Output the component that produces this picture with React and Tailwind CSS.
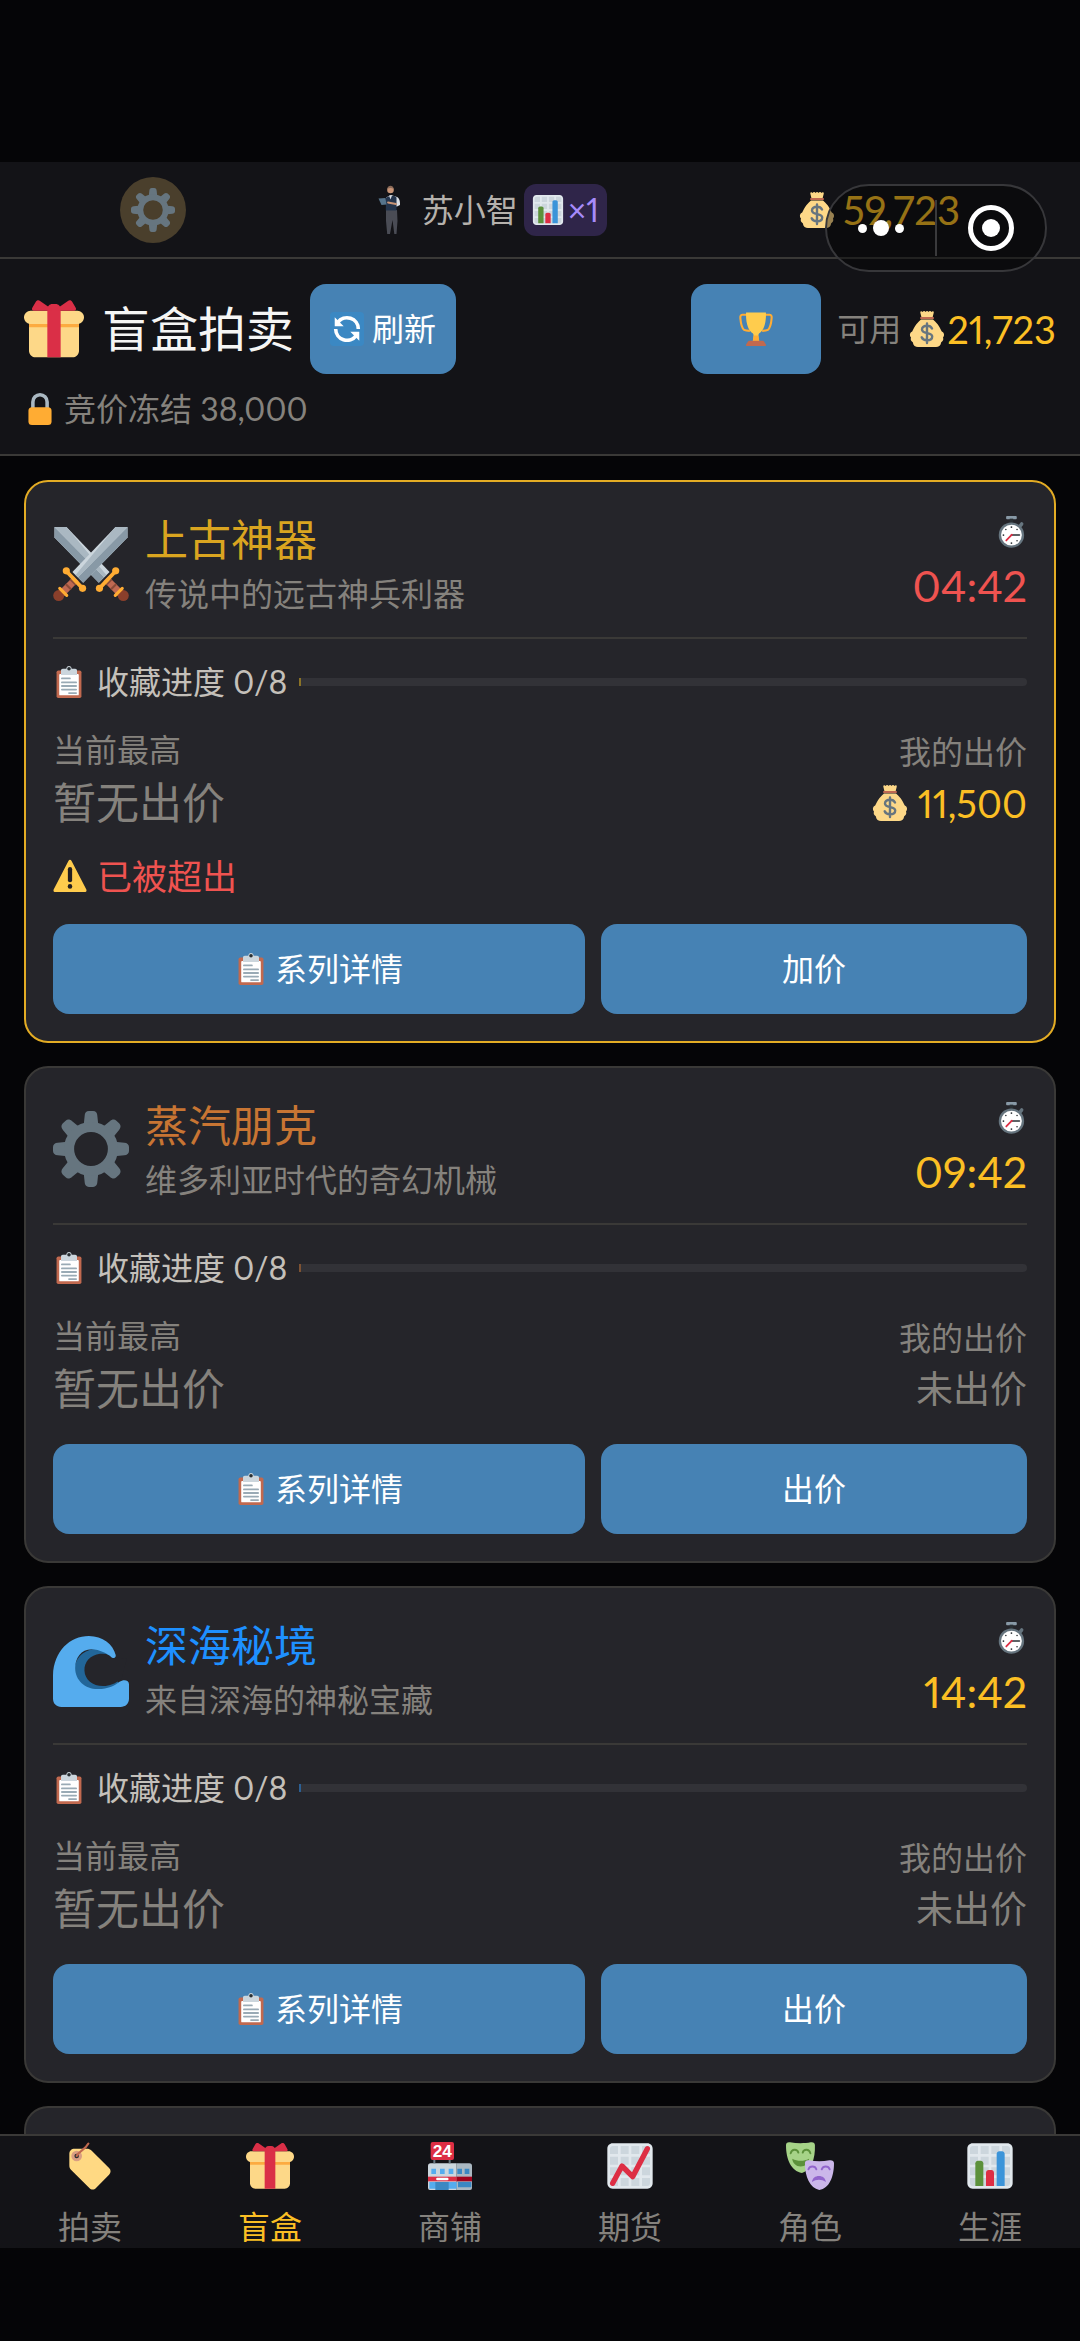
import clsx from 'clsx';

const Emoji = ({ className, children, label }) => (
  <svg viewBox="0 0 36 36" className={clsx('shrink-0', className)} role="img" aria-label={label}>
    {children}
  </svg>
);

const Gift = ({ className }) => (
  <Emoji className={className} label="礼物">
    <path fill="#FDD888" d="M33 31c0 2.2-1.8 4-4 4H7c-2.2 0-4-1.8-4-4V14c0-2.2 1.8-4 4-4h22c2.2 0 4 1.8 4 4v17z" />
    <path fill="#FDD888" d="M36 11c0 2.2-1.8 4-4 4H4c-2.2 0-4-1.8-4-4s1.8-4 4-4h28c2.2 0 4 1.8 4 4z" />
    <path fill="#FCAB40" d="M3 15h30v2H3z" />
    <path fill="#DA2F47" d="M19 3h-2c-1.657 0-3 1.343-3 3v29h8V6c0-1.656-1.343-3-3-3z" />
    <path fill="#DA2F47" d="M16 7c1.1 0 1.263-.516.361-1.147L9.639 1.147c-.902-.631-2.085-.366-2.631.589L4.992 5.264C4.446 6.219 4.9 7 6 7h10zm4 0c-1.1 0-1.263-.516-.361-1.147l6.723-4.706c.901-.631 2.085-.366 2.631.589l2.016 3.527C31.554 6.219 31.1 7 30 7H20z" />
  </Emoji>
);

const ChartGrid = () => (
  <>
    <rect x="2" y="2" width="32" height="32" rx="3" fill="#CCD6DD" />
    <path fill="#E1E8ED" d="M31 1H5C2.791 1 1 2.791 1 5v26c0 2.209 1.791 4 4 4h26c2.209 0 4-1.791 4-4V5c0-2.209-1.791-4-4-4zm0 2c1.103 0 2 .897 2 2v4h-6V3h4zm-4 16h6v6h-6v-6zm0-2v-6h6v6h-6zM25 3v6h-6V3h6zm-6 8h6v6h-6v-6zm0 8h6v6h-6v-6zM17 3v6h-6V3h6zm-6 8h6v6h-6v-6zm0 8h6v6h-6v-6zM3 5c0-1.103.897-2 2-2h4v6H3V5zm0 6h6v6H3v-6zm0 8h6v6H3v-6zm2 14c-1.103 0-2-.897-2-2v-4h6v6H5zm6 0v-6h6v6h-6zm8 0v-6h6v6h-6zm12 0h-4v-6h6v4c0 1.103-.897 2-2 2z" />
  </>
);

const BarChart = ({ className }) => (
  <Emoji className={className} label="柱状图">
    <ChartGrid />
    <path fill="#5C913B" d="M13 33H7V16c0-1.104.896-2 2-2h2c1.104 0 2 .896 2 2v17z" />
    <path fill="#3B94D9" d="M29 33h-6V9c0-1.104.896-2 2-2h2c1.104 0 2 .896 2 2v24z" />
    <path fill="#DD2E44" d="M21 33h-6V23c0-1.104.896-2 2-2h2c1.104 0 2 .896 2 2v10z" />
  </Emoji>
);

const LineChart = ({ className }) => (
  <Emoji className={className} label="走势图">
    <ChartGrid />
    <path fill="none" stroke="#DD2E44" strokeWidth="4" strokeLinecap="round" strokeLinejoin="round" d="M5 31l7-13 8 8L31 5" />
  </Emoji>
);

const Gear = ({ className }) => (
  <Emoji className={className} label="齿轮">
    <g fill="#66757F">
      {[0, 45, 90, 135, 180, 225, 270, 315].map((angle) => (
        <path key={angle} transform={`rotate(${angle} 18 18)`} d="M15 2.2C15 1 15.800 0 17 0h2c1.200 0 2 1 2 2.200L21.600 8h-7.200z" />
      ))}
    </g>
    <circle cx="18" cy="18" r="10.400" fill="none" stroke="#66757F" strokeWidth="4.800" />
  </Emoji>
);

const Sword = ({ flip }) => (
  <g transform={flip ? 'matrix(-1 0 0 1 36 0)' : undefined}>
    <path fill="#CCD6DD" d="M35.300 1v4.900L14.300 27.300 9.200 22.300 29.600 1z" />
    <path fill="#8899A6" d="M35.300 1v4.900L14.300 27.300 11.800 24.800z" />
    <path fill="#AAB8C2" d="M29.600 1h5.700L11.800 24.800 10.700 23.700z" />
    <path stroke="#BF6952" strokeWidth="3.400" d="M11 25.500l-7 7" />
    <path stroke="#8A4B38" strokeWidth="1" d="M8.200 25.700l2.600 2.600M6 27.900l2.600 2.600" />
    <circle cx="2.700" cy="33.400" r="2.600" fill="#8A3F2B" />
    <path stroke="#FFAC33" strokeWidth="1.500" strokeLinecap="round" d="M3.200 30l3.300 3.300" />
    <path stroke="#FFAC33" strokeWidth="1.800" d="M6.500 22l7.500 8" />
    <circle cx="6.300" cy="21.700" r="1.700" fill="#FFAC33" />
    <circle cx="14" cy="30" r="1.700" fill="#FFAC33" />
  </g>
);

const Swords = ({ className }) => (
  <Emoji className={className} label="双剑">
    <Sword flip />
    <Sword />
  </Emoji>
);

const Wave = ({ className }) => (
  <Emoji className={className} label="海浪">
    <path fill="#226699" d="M29 12.500C26 7 12 6 10 18c0 8 7 12 14 10 3-.5 6-2 7-3.500L26 16z" />
    <path fill="#25252A" d="M29.300 12.500c-2-1.300-4.500-2-7-1.700-4.600.6-7.600 3.800-7.400 8 .2 4.500 4.300 7.700 10 7.200 3-.3 5.500-1.500 7.600-3.500L35 13z" />
    <path fill="#55ACEE" d="M0 21C.4 9.500 8 2.400 17 2.400c6.500 0 11.500 4 12.700 9 .2 1.200-.6 1.700-1.900 1.100-2.200-1.800-5.600-3.700-9.500-3.800-5 0-7.800 4.300-7.800 8.800 0 6 5 10.200 11 10 4.500-.1 7.500-1.500 10-3.500 1.800-1.200 4.500-1 4.500 1.200V32c0 2.500-1.700 4-4 4H4c-2.400 0-4-1.600-4-4z" />
  </Emoji>
);

const Clipboard = ({ className }) => (
  <Emoji className={className} label="剪贴板">
    <rect x="4" y="5" width="28" height="31" rx="2" fill="#C1694F" />
    <rect x="7" y="9" width="22" height="24" rx="1" fill="#fff" />
    <path fill="#CCD6DD" d="M25 3h-4c0-1.657-1.343-3-3-3s-3 1.343-3 3h-4c-1.104 0-2 .896-2 2v5h18V5c0-1.104-.896-2-2-2z" />
    <circle cx="18" cy="3" r="2" fill="#292F33" />
    <path stroke="#99AAB5" strokeWidth="2" strokeLinecap="round" d="M10 14h9M10 18.500h16M10 22.500h16M10 26.500h16M18 30.500h8" />
  </Emoji>
);

const MoneyBag = ({ className }) => (
  <Emoji className={className} label="钱袋">
    <path fill="#FDD888" d="M12 8.500C6.500 13 4.500 18 3.200 20.500.8 21.500.200 24.500 2 26.500c-.8 2 0 3.800 1.800 4.700C4.200 34.500 6.500 36 9 36h18c2.500 0 4.800-1.500 5.200-4.800 1.800-.9 2.600-2.700 1.800-4.700 1.800-2 1.200-5-1.200-6C31.500 18 29.500 13 24 8.500z" />
    <path fill="#FDD888" d="M11.300 1.500c0-1.500 1.500-1.700 2.300-.5.700-1.300 2.300-1.300 3 0 .7-1.300 2.200-1.300 2.900 0 .7-1.300 2.300-1.300 3 0 .9-1.200 2.300-1 2.300.5L23.700 6H12.400z" />
    <path stroke="#BF6952" strokeWidth="2" strokeLinecap="round" d="M12 7h12" />
    <path fill="none" stroke="#67757F" strokeWidth="2.400" strokeLinecap="round" d="M23 17.500c-1-2-3-2.700-5-2.700-3 0-5 1.400-5 3.700 0 5 10.200 2.400 10.200 7 0 2.300-2 3.800-5.200 3.800-2.500 0-4.500-1-5.300-3M18 12.500v19.500" />
  </Emoji>
);

const Warning = ({ className }) => (
  <Emoji className={className} label="警告">
    <path fill="#FFCC4D" d="M2.653 35C.811 35-.001 33.662.847 32.027L16.456 1.972c.849-1.635 2.238-1.635 3.087 0l15.609 30.056c.85 1.634.037 2.972-1.805 2.972H2.653z" />
    <path fill="none" stroke="#231F20" strokeWidth="4.500" strokeLinecap="round" d="M18 10.800v11.600" />
    <circle cx="18" cy="29" r="2.400" fill="#231F20" />
  </Emoji>
);

const Lock = ({ className }) => (
  <Emoji className={className} label="锁">
    <path fill="none" stroke="#AAB8C2" strokeWidth="4" d="M10 18v-8a8 8 0 0 1 16 0v8" />
    <rect x="5" y="16" width="26" height="20" rx="4" fill="#FFAC33" />
  </Emoji>
);

const Trophy = ({ className }) => (
  <Emoji className={className} label="奖杯">
    <path fill="none" stroke="#FFAC33" strokeWidth="2.200" d="M10 3H3.500C1.600 3 1.200 4.500 1.500 7c.4 5 1.500 10 4 12 1.500 1 4 1 6 1M26 3h6.500c1.900 0 2.300 1.500 2 4-.4 5-1.500 10-4 12-1.500 1-4 1-6 1" />
    <path fill="#FFCC4D" d="M7.500.5h21C29 12 26 20 21.500 22.500 20 23.500 20.500 28 21.500 31h-7c1-3 1.500-7.500 0-8.500C10 20 7 12 7.500.5z" />
    <path fill="#FFAC33" d="M15.500 25h5l.8 5.500h-6.600z" />
    <path fill="#C1694F" d="M11 30.500h14c1 0 1.500.7 2 1.500l1.500 2.500c.5.800 0 1.500-1 1.500h-19c-1 0-1.500-.7-1-1.500L9 32c.5-.8 1-1.500 2-1.500z" />
  </Emoji>
);

const Refresh = ({ className }) => (
  <Emoji className={className} label="刷新">
    <rect width="36" height="36" rx="4" fill="#3B88C3" />
    <g fill="none" stroke="#fff" strokeWidth="3.800">
      <path d="M8.300 11A12 12 0 0 1 30 18" />
      <path d="M27.700 25A12 12 0 0 1 6 18" />
    </g>
    <path fill="#fff" d="M5 5.500V15h9.500zM31 30.500V21h-9.500z" />
  </Emoji>
);

const Stopwatch = ({ className }) => (
  <Emoji className={className} label="秒表">
    <rect x="12.500" y="0" width="12" height="3.600" rx="1" fill="#8899A6" />
    <rect x="16.500" y="3" width="4" height="5" fill="#292F33" />
    <path stroke="#66757F" strokeWidth="4" strokeLinecap="round" d="M28.500 11l1.500-2" />
    <circle cx="18.500" cy="21.500" r="14.300" fill="#66757F" />
    <circle cx="18.500" cy="21.500" r="11.700" fill="#fff" />
    <g fill="#292F33">
      <circle cx="18.500" cy="12.500" r="1" />
      <circle cx="18.500" cy="30.500" r="1" />
      <circle cx="9.500" cy="21.500" r="1" />
      <circle cx="12.200" cy="15.200" r=".9" />
      <circle cx="24.800" cy="15.200" r=".9" />
      <circle cx="24.800" cy="27.800" r=".9" />
    </g>
    <path stroke="#292F33" strokeWidth="1.800" strokeLinecap="round" d="M18.500 21.300h9" />
    <path stroke="#DD2E44" strokeWidth="2" strokeLinecap="round" d="M19 21l-6.300 6.500" />
  </Emoji>
);

const Tag = ({ className }) => (
  <Emoji className={className} label="标签">
    <path fill="#FFD983" d="M2.500 9C2.500 6.500 4 5 6.500 5h9c1.600 0 2.600.4 3.600 1.400L32.300 19.500c1.500 1.500 1.500 3.500 0 5l-9.800 10c-1.500 1.500-3.500 1.500-5 0L3.900 21c-1-1-1.400-2-1.400-3.600z" />
    <circle cx="8" cy="10.500" r="4" fill="#D99E82" />
    <circle cx="8" cy="10.500" r="1.700" fill="#292F33" />
    <path fill="none" stroke="#C1694F" strokeWidth="1.600" strokeLinecap="round" d="M8 10.500C10 6 14 6.500 16.800 1.200" />
  </Emoji>
);

const Store = ({ className }) => (
  <Emoji className={className} label="便利店">
    <path fill="#CCD6DD" d="M1.500 18a2 2 0 0 1 2-2H23v20H3a1.500 1.500 0 0 1-1.500-1.500z" />
    <path fill="#AAB8C2" d="M23 16h9.500a2 2 0 0 1 2 2v16.500A1.500 1.500 0 0 1 33 36H23z" />
    <path fill="#55ACEE" d="M4 20h3.500v4H4zM10.500 20H14v4h-3.500zM17 20h3.500v4H17zM2.500 30H23v5H2.500z" />
    <path fill="#3B88C3" d="M23.500 20H27v4h-3.500zM29 20h3.500v4H29zM24 30h10v4H24zM7 30h10v6H7z" />
    <path fill="#DD2E44" d="M1.500 26H23v3.500H1.500z" />
    <path fill="#A0041E" d="M23 26h11.500v3.500H23z" />
    <path stroke="#fff" strokeWidth="1.800" strokeLinecap="round" d="M8.500 27.800h7.500" />
    <path fill="#66757F" d="M5.500 13h1.500v3H5.500zM17 13h1.500v3H17z" />
    <rect x="3.500" y="0" width="17.500" height="13.500" rx="1.500" fill="#DD2E44" />
    <text x="12.200" y="11.500" textAnchor="middle" fontSize="13" fontWeight="700" fill="#fff" fontFamily="Liberation Sans, sans-serif">24</text>
  </Emoji>
);

const Masks = ({ className }) => (
  <Emoji className={className} label="面具">
    <path fill="#A6D388" d="M0 2.500C0 .5 1 0 3 .2c5 .9 11 .9 15.500 0 2-.2 3.200.3 3.200 2.300C22 13 19 21 12 23.200 4 22 0 13 0 2.500z" />
    <path fill="none" stroke="#5C913B" strokeWidth="1.400" strokeLinecap="round" d="M3.500 8.500c.8-3.500 5-3.500 5.800-.5M12.500 8c.8-3 5-3 5.800.5" />
    <path fill="#5C913B" d="M4.700 12.500c4 2 8.600 2 12.600 0-.3 3.500-3 5.800-6.300 5.800s-6-2.300-6.300-5.800z" />
    <path fill="#CBB7EA" d="M14.200 16c0-2 1.200-2.500 3.200-2.300 5 .9 10 .9 15.200 0 2-.2 3.400.3 3.400 2.300 0 10-3.500 19-11 20-7-1.500-10.800-9.500-10.800-20z" />
    <path fill="none" stroke="#9266CC" strokeWidth="1.400" strokeLinecap="round" d="M16.800 20.500c1-2.800 5-2.800 6 0M26.800 20.500c1-2.800 5-2.800 6 0" />
    <path fill="#9266CC" d="M19.500 30c.3-3 2.500-4.500 5.200-4.500s4.900 1.500 5.200 4.500c-3.400-2.300-7-2.300-10.400 0z" />
  </Emoji>
);

const Avatar = ({ className }) => (
  <svg viewBox="0 0 24 50" className={clsx('shrink-0', className)} role="img" aria-label="头像">
    <path fill="#4A4C55" d="M8 25h11l.5 11-1 13h-2.200L14.500 35 12 49H9.200L8 36z" />
    <path fill="#DADFE6" d="M8 12.500l5-2.500 6 2c2.500 1 3.200 5 3 8l-3 1.500L8 21z" />
    <path fill="#24354D" d="M8 12.500l4-1.500 4.500 0 2 1.500v13H7.800z" />
    <path fill="#DADFE6" d="M11 10.500h3l-1.500 4z" />
    <circle cx="12.500" cy="5" r="3.300" fill="#C99577" />
    <path fill="#8A6A58" d="M9.300 4c.2-4.500 6.200-4.500 6.400 0-2-1.500-4.400-1.500-6.400 0z" />
    <path fill="#56748C" d="M.5 13.500l7-.5 1 6.500-5 .5z" />
    <path stroke="#C99577" strokeWidth="1.800" strokeLinecap="round" d="M10 17.500l8 1.500" />
  </svg>
);

const auctions = [
  {
    name: '上古神器', desc: '传说中的远古神兵利器', icon: Swords, time: '04:42', bid: '11,500', outbid: true,
    nameColor: 'text-[#daa520]', timeColor: 'text-[#ef5350]', tick: 'bg-[#8a7226]', border: 'border-[#e3ac24]',
  },
  {
    name: '蒸汽朋克', desc: '维多利亚时代的奇幻机械', icon: Gear, time: '09:42',
    nameColor: 'text-[#c87533]', timeColor: 'text-[#fbbf24]', tick: 'bg-[#7d5233]', border: 'border-[#3a3937]',
  },
  {
    name: '深海秘境', desc: '来自深海的神秘宝藏', icon: Wave, time: '14:42',
    nameColor: 'text-[#1e90ff]', timeColor: 'text-[#fbbf24]', tick: 'bg-[#2c5f92]', border: 'border-[#3a3937]',
  },
];

const tabs = [
  { label: '拍卖', icon: Tag },
  { label: '盲盒', icon: Gift, active: true },
  { label: '商铺', icon: Store },
  { label: '期货', icon: LineChart },
  { label: '角色', icon: Masks },
  { label: '生涯', icon: BarChart },
];

const Button = ({ className, children, ...props }) => (
  <button
    type="button"
    className={clsx('flex h-[90px] items-center justify-center rounded-2xl bg-[#4682b4] text-[32px] text-white', className)}
    {...props}
  >
    {children}
  </button>
);

function StatusBar() {
  return (
    <div className="relative flex h-[97px] shrink-0 items-center justify-around border-b-2 border-[#3a3937] bg-[#131317] px-6">
      <button type="button" aria-label="设置" className="flex size-[66px] items-center justify-center rounded-full bg-[#4a3f2c]">
        <Gear className="size-[44px]" />
      </button>
      <div className="flex items-center text-[#b5b1ac]">
        <Avatar className="mr-5 h-[50px] w-6" />
        <span className="mr-1.5 text-[32px] leading-[46px]">苏小智</span>
        <span className="flex h-[52px] items-center gap-1 rounded-xl bg-[#2f2549] px-2 text-[32px] text-[#a78bfa]">
          <BarChart className="size-8" />
          ×1
        </span>
      </div>
      <div className="flex items-center gap-2 text-[40px] leading-[46px] text-[#fbbf24]">
        <MoneyBag className="size-[36px]" />
        59,723
      </div>

      {/* floating capsule sits on top of both bars */}
      <div className="absolute top-[22px] right-[33px] z-10 flex h-[88px] w-[222px] items-center rounded-full border-2 border-[#37373a] bg-black/40">
        <button type="button" aria-label="更多" className="flex flex-1 items-center justify-center gap-1.5">
          <span className="size-[9px] rounded-full bg-white" />
          <span className="size-4 rounded-full bg-white" />
          <span className="size-[9px] rounded-full bg-white" />
        </button>
        <span className="h-14 w-0.5 bg-[#3a3a3c]" />
        <button type="button" aria-label="关闭" className="flex flex-1 items-center justify-center">
          <span className="flex size-[46px] items-center justify-center rounded-full border-[5px] border-white">
            <span className="size-[18px] rounded-full bg-white" />
          </span>
        </button>
      </div>
    </div>
  );
}

function PageHeader() {
  return (
    <header className="shrink-0 border-b-2 border-[#3a3937] bg-[#131317] px-6 pt-[25px] pb-[22px]">
      <div className="flex items-center">
        <Gift className="size-[60px]" />
        <h1 className="ml-[18px] text-[48px] leading-[60px] text-[#f5f5f4]">盲盒拍卖</h1>
        <Button className="ml-4 gap-2 px-5">
          <Refresh className="size-[34px]" />
          刷新
        </Button>
        <Button className="ml-auto w-[130px]" aria-label="排行榜">
          <Trophy className="size-[34px]" />
        </Button>
        <span className="ml-4 text-[32px] text-[#85827d]">可用</span>
        <span className="ml-2 flex items-center gap-0.5 text-[38px] text-[#fbbf24]">
          <MoneyBag className="size-[36px]" />
          21,723
        </span>
      </div>
      <div className="mt-3 flex items-center gap-2 text-[32px] leading-[46px] text-[#85827d]">
        <Lock className="size-8" />
        竞价冻结 38,000
      </div>
    </header>
  );
}

function AuctionCard({ item }) {
  const Icon = item.icon;

  return (
    <article className={clsx('shrink-0 rounded-3xl border-2 bg-[#25252a] p-[27px]', item.border)}>
      <div className="flex items-center border-b-2 border-[#3a3937] pb-5">
        <Icon className="size-[76px]" />
        <div className="ml-4 flex-1">
          <h2 className={clsx('text-[43px] leading-[62px]', item.nameColor)}>{item.name}</h2>
          <p className="text-[32px] leading-[46px] text-[#85827d]">{item.desc}</p>
        </div>
        <div className="flex flex-col items-end">
          <div className="flex h-[46px] items-center">
            <Stopwatch className="size-8" />
          </div>
          <p className={clsx('text-[43px] leading-[62px]', item.timeColor)}>{item.time}</p>
        </div>
      </div>

      <div className="mt-5 flex items-center text-[32px] leading-[46px] text-[#c4c0ba]">
        <Clipboard className="mr-3 size-8" />
        收藏进度 0/8
        <div className="ml-3 h-2 flex-1 overflow-hidden rounded-r-full bg-[#323237]">
          <div className={clsx('h-full w-0.5', item.tick)} />
        </div>
      </div>

      <div className="mt-[22px] flex items-center justify-between text-[#85827d]">
        <div>
          <p className="text-[32px] leading-[46px]">当前最高</p>
          <p className="text-[43px] leading-[60px]">暂无出价</p>
        </div>
        <div className="text-right">
          <p className="text-[32px] leading-[46px]">我的出价</p>
          {item.bid ? (
            <p className="flex items-center justify-end gap-2.5 text-[38px] leading-[56px] text-[#fbbf24]">
              <MoneyBag className="size-[36px]" />
              {item.bid}
            </p>
          ) : (
            <p className="text-[37px] leading-[56px]">未出价</p>
          )}
        </div>
      </div>

      {item.outbid && (
        <p className="mt-5 flex items-center gap-2.5 text-[35px] leading-[46px] text-[#ef5350]">
          <Warning className="size-[34px]" />
          已被超出
        </p>
      )}

      <div className="mt-[25px] grid grid-cols-[5fr_4fr] gap-4">
        <Button className="gap-2">
          <Clipboard className="size-8" />
          系列详情
        </Button>
        <Button>{item.bid ? '加价' : '出价'}</Button>
      </div>
    </article>
  );
}

function TabBar() {
  return (
    <nav className="grid shrink-0 grid-cols-6 border-t-2 border-[#3a3937] bg-[#131317] pt-1.5">
      {tabs.map((tab) => {
        const Icon = tab.icon;

        return (
          <a key={tab.label} href="#" className={clsx('flex flex-col items-center gap-4 text-[32px] leading-[42px]', tab.active ? 'text-[#fbbf24]' : 'text-[#85827d]')}>
            <Icon className="size-12" />
            {tab.label}
          </a>
        );
      })}
    </nav>
  );
}

export default function App() {
  return (
    <div className="flex h-screen flex-col bg-[#050507] pt-[162px] pb-[93px] font-['Lato','Noto_Sans_CJK_SC',sans-serif] proportional-nums">
      <StatusBar />
      <PageHeader />
      <main className="flex min-h-0 flex-1 flex-col gap-[23px] overflow-hidden px-6 pt-6">
        {auctions.map((item) => (
          <AuctionCard key={item.name} item={item} />
        ))}
        <div className="flex-1 rounded-t-3xl border-2 border-b-0 border-[#3a3937] bg-[#25252a]" />
      </main>
      <TabBar />
    </div>
  );
}
